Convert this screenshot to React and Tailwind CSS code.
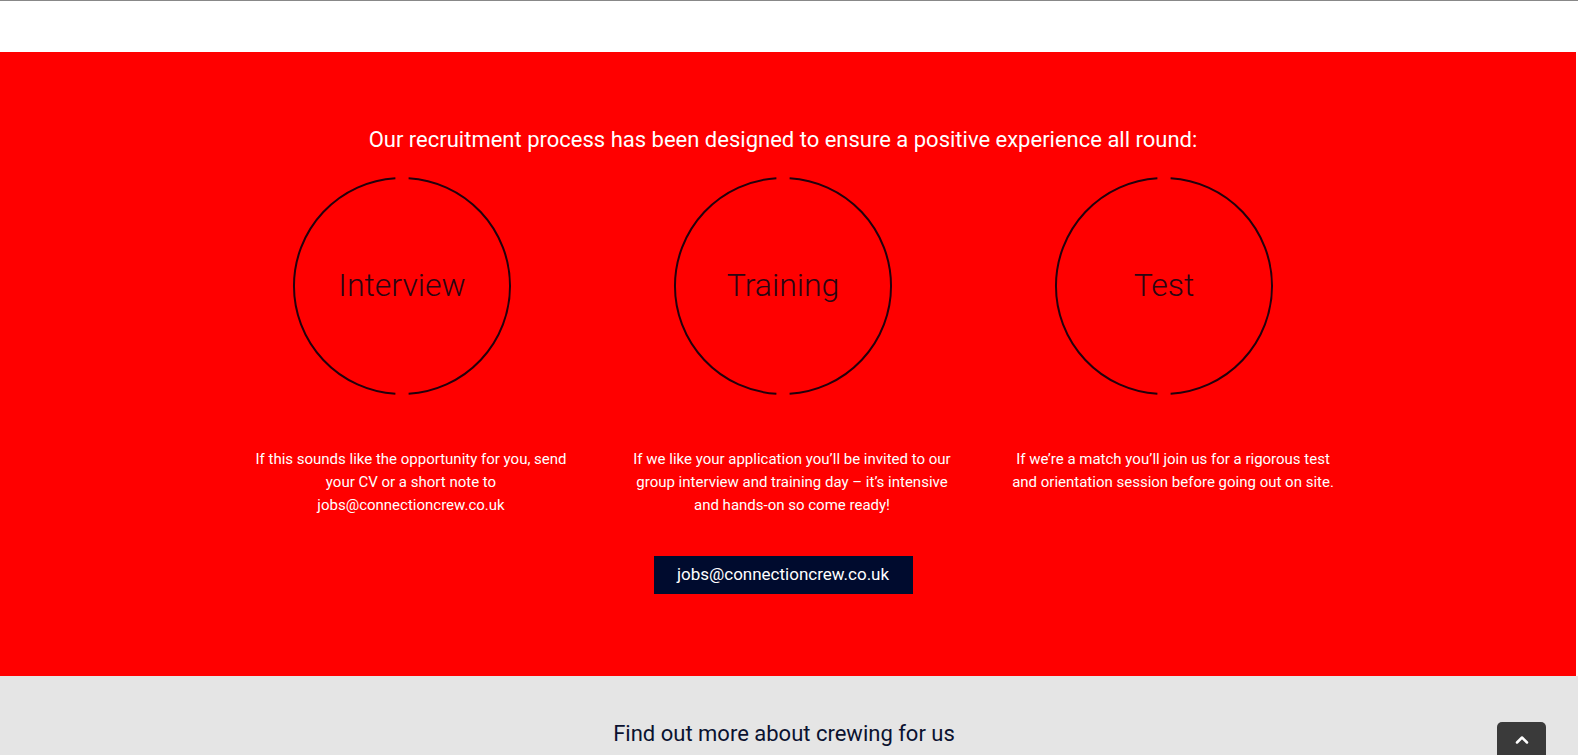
import { ChevronUp } from 'lucide-react';

const steps = [
  {
    title: 'Interview',
    lines: ['If this sounds like the opportunity for you, send', 'your CV or a short note to', 'jobs@connectioncrew.co.uk'],
  },
  {
    title: 'Training',
    lines: ['If we like your application you\u2019ll be invited to our', 'group interview and training day \u2013 it\u2019s intensive', 'and hands-on so come ready!'],
  },
  {
    title: 'Test',
    lines: ['If we\u2019re a match you\u2019ll join us for a rigorous test', 'and orientation session before going out on site.'],
  },
];

function Ring({ label }) {
  return (
    <div className="relative w-[220px] h-[220px] flex items-center justify-center">
      <svg width="220" height="220" viewBox="0 0 220 220" className="absolute inset-0">
        <path d="M 116.6 2.2 A 108 108 0 0 1 116.6 217.8" fill="none" stroke="#22000c" strokeWidth="2" />
        <path d="M 103.4 217.8 A 108 108 0 0 1 103.4 2.2" fill="none" stroke="#22000c" strokeWidth="2" />
      </svg>
      <span className="relative text-[32px] font-light text-[#2a0612] leading-none -mt-[2px]">{label}</span>
    </div>
  );
}

export default function App() {
  return (
    <div className="w-full min-h-screen bg-white font-['Roboto',sans-serif] border-t border-[#888]">
      {/* white strip */}
      <div className="h-[51px] bg-white" />

      {/* red process section */}
      <div className="bg-[#ff0000] h-[624px] pr-[10px] mr-[2px]">
        <div className="pt-[74px] text-center text-white text-[22px] leading-[28px]">
          Our recruitment process has been designed to ensure a positive experience all round:
        </div>

        <div className="mx-auto w-[1143px] grid grid-cols-3 mt-[22px]">
          {steps.map((s) => (
            <div key={s.title} className="flex flex-col items-center">
              <Ring label={s.title} />
              <div className="mt-[52px] pl-[18px] text-center text-white text-[15px] leading-[23px]">
                {s.lines.map((l) => (
                  <div key={l}>{l}</div>
                ))}
              </div>
            </div>
          ))}
        </div>

        <div className="flex justify-center mt-[39px]">
          <div className="bg-[#000b2e] text-white text-[17px] w-[259px] h-[38px] flex items-center justify-center">
            jobs@connectioncrew.co.uk
          </div>
        </div>
      </div>

      {/* grey section */}
      <div className="relative bg-[#e5e5e5] h-[80px] pr-[10px]">
        <div className="pt-[44px] text-center text-[#0b1230] text-[22px] leading-[28px]">
          Find out more about crewing for us
        </div>
        <div className="absolute left-[1497px] top-[46px] w-[49px] h-[40px] bg-[#3a3a3a] rounded-[5px] flex justify-center pt-[8px]">
          <ChevronUp size={20} strokeWidth={3} className="text-white" />
        </div>
      </div>
    </div>
  );
}
